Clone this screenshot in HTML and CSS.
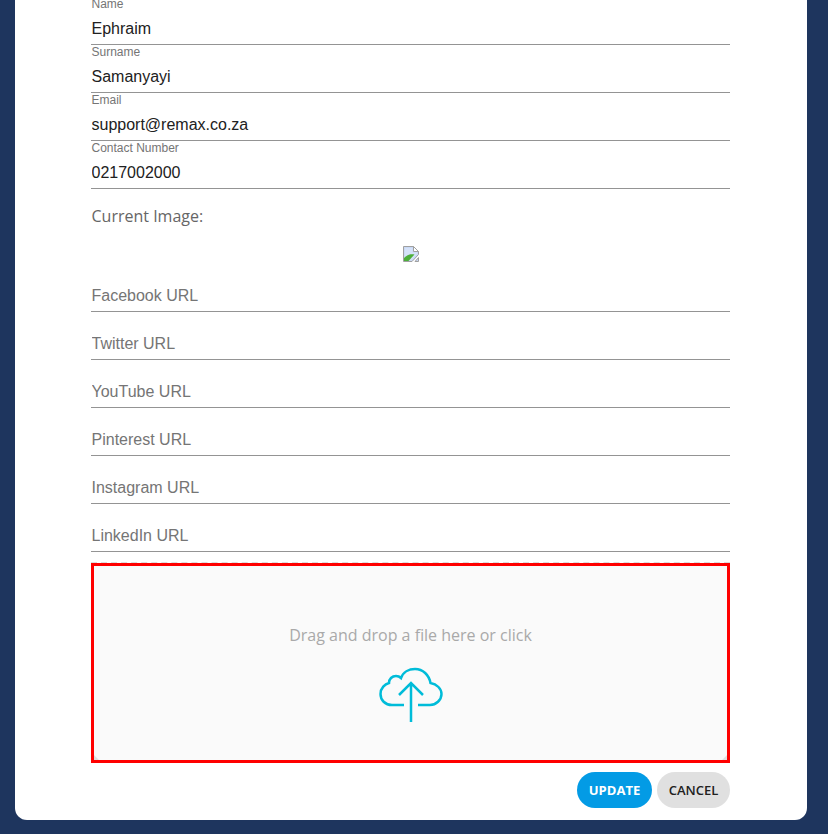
FILE: index.html
```html
<!DOCTYPE html>
<html lang="en">
<head>
    <meta charset="UTF-8">
    <meta name="viewport" content="width=device-width, initial-scale=1.0">
    <title>Edit agent</title>
    <link rel="stylesheet" href="styles.css">
</head>
<body>
    <div class="card">
        <form class="form">
            <div class="field">
                <label class="field-label">Name</label>
                <input class="field-input" type="text" value="Ephraim">
            </div>
            <div class="field">
                <label class="field-label">Surname</label>
                <input class="field-input" type="text" value="Samanyayi">
            </div>
            <div class="field">
                <label class="field-label">Email</label>
                <input class="field-input" type="text" value="support@remax.co.za">
            </div>
            <div class="field">
                <label class="field-label">Contact Number</label>
                <input class="field-input" type="text" value="0217002000">
            </div>

            <p class="current-title">Current Image:</p>
            <div class="current-image">
                <svg width="16" height="16" viewBox="0 0 16 16">
                    <path d="M0.5 0.5H10.5L15.5 5.5V8.5L9 15.5H0.5Z" fill="#c9d9f5" stroke="#a0a0a0"/>
                    <path d="M2 2H9.5V6.5H14V8L8 14H2Z" fill="#d5e2f9"/>
                    <path d="M1 15V12C4 9 7 7.5 11.5 8.5L5.5 15Z" fill="#4caf3a"/>
                    <path d="M10.5 0.5V5.5H15.5Z" fill="#fff" stroke="#a0a0a0"/>
                    <path d="M15.5 11.5V15.5H12Z" fill="#c9d9f5" stroke="#a0a0a0"/>
                </svg>
            </div>

            <div class="field"><input class="field-input" type="text" placeholder="Facebook URL"></div>
            <div class="field"><input class="field-input" type="text" placeholder="Twitter URL"></div>
            <div class="field"><input class="field-input" type="text" placeholder="YouTube URL"></div>
            <div class="field"><input class="field-input" type="text" placeholder="Pinterest URL"></div>
            <div class="field"><input class="field-input" type="text" placeholder="Instagram URL"></div>
            <div class="field"><input class="field-input" type="text" placeholder="LinkedIn URL"></div>

            <div class="dropzone-wrap">
                <div class="dropzone">
                    <p class="dropzone-text">Drag and drop a file here or click</p>
                    <svg class="dropzone-icon" width="64" height="56" viewBox="379 667 64 56" fill="none" stroke="#00bcd9" stroke-width="2.5">
                        <path d="M404 705H392C385 705 380.5 700 380.5 694C380.5 688 385 684 389 683C389 679 392 676 396 676C398 676 400 677 401 678C403 672 409 669 415 669C423 669 429 675 430.5 683C437 684 441.5 689 441.5 694C441.5 700 436 705 430 705H418"/>
                        <path d="M411 722V683M399 695L411 683L423 695"/>
                    </svg>
                </div>
            </div>

            <div class="actions">
                <button class="btn btn-update" type="button">Update</button>
                <button class="btn btn-cancel" type="button">Cancel</button>
            </div>
        </form>
    </div>
</body>
</html>
```

FILE: styles.css
```css
html, body {
    height: 100%;
}

body {
    margin: 0;
    overflow: hidden;
    background: #1e355e;
    font-family: "Liberation Sans", Arial, sans-serif;
}

.card {
    width: 792px;
    margin-left: 15px;
    padding: 0 77px 12px 76px;
    box-sizing: border-box;
    background: #fff;
    border-radius: 0 0 12px 12px;
}

/* page is scrolled a few px, so the card starts above the window */
.form {
    margin-top: -3px;
}

.field {
    display: flex;
    flex-direction: column;
    justify-content: flex-end;
    height: 48px;
    box-sizing: border-box;
    border-bottom: 1px solid #949494;
}

.field-label {
    padding-left: 0.5px;
    font-size: 12px;
    line-height: 13px;
    color: #757575;
}

.field-input {
    width: 100%;
    height: 33px;
    padding: 2px 0 0 0.5px;
    border: 0;
    outline: 0;
    box-sizing: border-box;
    background: transparent;
    font-family: "Liberation Sans", Arial, sans-serif;
    font-size: 16px;
    color: #212121;
}

.field-input::placeholder {
    color: #757575;
    opacity: 1;
}

.current-title {
    margin: 15px 0 0 0.5px;
    font-family: "Open Sans", sans-serif;
    font-size: 16px;
    line-height: 24px;
    color: #666;
}

.current-image {
    display: flex;
    justify-content: center;
    padding: 18px 0 2px;
}

.dropzone-wrap {
    margin-top: 10px;
    border-top: 2px dashed #dcdcdc;
}

.dropzone {
    display: flex;
    flex-direction: column;
    align-items: center;
    height: 200px;
    margin-top: -1px;
    box-sizing: border-box;
    border: 3px solid #f00;
    background:
        linear-gradient(to top left, #e0e0e0 3px, transparent 4px) right bottom / 6px 6px no-repeat,
        linear-gradient(to top right, #e0e0e0 3px, transparent 4px) left bottom / 6px 6px no-repeat,
        #fafafa;
}

.dropzone-text {
    margin: 57px 0 0;
    font-family: "Open Sans", sans-serif;
    font-size: 16px;
    line-height: 24px;
    color: #a9a9a9;
}

.dropzone-icon {
    margin-top: 20px;
}

.actions {
    display: flex;
    justify-content: flex-end;
    gap: 5px;
    margin-top: 9px;
}

.btn {
    height: 36px;
    padding: 0;
    border: 0;
    border-radius: 18px;
    font-family: "Open Sans", sans-serif;
    font-size: 13px;
    font-weight: 600;
    text-transform: uppercase;
}

.btn-update {
    width: 75px;
    background: #039be5;
    color: #fff;
    font-weight: 700;
}

.btn-cancel {
    width: 73px;
    background: #e0e0e0;
    color: #212121;
}
```
